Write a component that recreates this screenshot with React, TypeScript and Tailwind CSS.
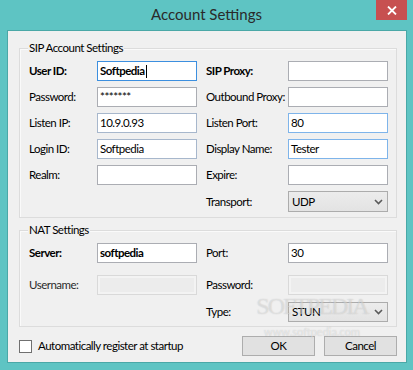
import React from "react";

const font = "font-['Segoe_UI',Lato,'Liberation_Sans',sans-serif]";

function Field({
  value,
  bold,
  tone = "gray",
  caret,
}: {
  value?: string;
  bold?: boolean;
  tone?: "gray" | "blue" | "focus" | "soft" | "off";
  caret?: boolean;
}) {
  const border =
    tone === "focus"
      ? "border-[#3c8fdf]"
      : tone === "blue"
      ? "border-[#7eb4ea]"
      : tone === "soft"
      ? "border-[#a7b7cc]"
      : tone === "off"
      ? "border-[#d9d9d9]"
      : "border-[#abadb3]";
  const bg = tone === "off" ? "bg-[#ececec] shadow-[inset_0_0_0_2px_#f3f3f3]" : "bg-white";
  return (
    <div className={`h-[20px] w-[100px] border ${border} ${bg} flex items-center pl-[2px]`}>
      <span className={bold ? "font-bold" : ""}>{value}</span>
      {caret && <span className="ml-[1px] h-[13px] w-px bg-black" />}
    </div>
  );
}

function Select({ value, tall }: { value: string; tall?: boolean }) {
  return (
    <div
      className={`${tall ? "h-[21px]" : "h-[20px]"} w-[100px] border border-[#acacac] bg-gradient-to-b from-[#ececec] to-[#e3e3e3] flex items-center justify-between pl-[3px] pr-[4px]`}
    >
      <span>{value}</span>
      <svg width="9" height="6" viewBox="0 0 9 6">
        <path d="M1 1 L4.5 4.5 L8 1" stroke="#5a5a5a" strokeWidth="1.6" fill="none" />
      </svg>
    </div>
  );
}

function Label({ text, bold, right }: { text: string; bold?: boolean; right?: boolean }) {
  return (
    <div className={`h-[20px] flex items-center whitespace-nowrap ${right ? "pl-[9px]" : ""} ${bold ? "font-bold" : ""}`}>
      {text}
    </div>
  );
}

function Group({ title, children, className }: { title: string; children: React.ReactNode; className: string }) {
  return (
    <div className={`relative border border-[#dcdcdc] shadow-[inset_1px_1px_0_#fafafa] ${className}`}>
      <span className="absolute -top-[7px] left-[8px] bg-[#f0f0f0] px-[1px]">{title}</span>
      {children}
    </div>
  );
}

export default function App() {
  return (
    <div
      className={`relative w-[413px] h-[370px] bg-[#5ec4c3] text-black text-[11.5px] leading-none tracking-[-0.5px] overflow-hidden ${font}`}
    >
      {/* title bar */}
      <div className="relative h-[30px] flex items-center justify-center">
        <span className="text-[15px] tracking-normal text-[#2a2a2a] -mt-[1px]">Account Settings</span>
        <div className="absolute right-[6px] top-0 w-[31px] h-[20px] bg-[#c75050] flex items-center justify-center">
          <svg width="10" height="9" viewBox="0 0 10 9">
            <path d="M1 0.5 L9 8.5 M9 0.5 L1 8.5" stroke="#fff" strokeWidth="1.8" />
          </svg>
        </div>
      </div>

      {/* client area */}
      <div className="ml-[7px] w-[400px] h-[333px] bg-[#f0f0f0] border border-[#4aa8a7] pl-[11px] pr-[9px] pt-[17px]">
        <Group title="SIP Account Settings" className="pt-[12px] pb-[5px] pl-[9px]">
          <div className="grid grid-cols-[68px_100px_91px_100px] grid-rows-[20px_26px_26px_26px_26px_27px] items-end">
            <Label text="User ID:" bold />
            <Field value="Softpedia" bold tone="focus" caret />
            <Label text="SIP Proxy:" bold right />
            <Field />

            <Label text="Password:" />
            <Field value="*******" />
            <Label text="Outbound Proxy:" right />
            <Field />

            <Label text="Listen IP:" />
            <Field value="10.9.0.93" tone="soft" />
            <Label text="Listen Port:" right />
            <Field value="80" tone="blue" />

            <Label text="Login ID:" />
            <Field value="Softpedia" tone="soft" />
            <Label text="Display Name:" right />
            <Field value="Tester" tone="blue" />

            <Label text="Realm:" />
            <Field />
            <Label text="Expire:" right />
            <Field />

            <span />
            <span />
            <Label text="Transport:" right />
            <Select value="UDP" tall />
          </div>
        </Group>

        <Group title="NAT Settings" className="mt-[12px] pt-[12px] pb-[4px] pl-[9px]">
          <div className="grid grid-cols-[68px_100px_91px_100px] grid-rows-[20px_32px_27px] items-end">
            <Label text="Server:" bold />
            <Field value="softpedia" bold />
            <Label text="Port:" right />
            <Field value="30" />

            <div className="text-[#2b2b2b]">
              <Label text="Username:" />
            </div>
            <Field tone="off" />
            <Label text="Password:" right />
            <Field tone="off" />

            <span />
            <span />
            <Label text="Type:" right />
            <Select value="STUN" />
          </div>
        </Group>

        <div className="mt-[9px] flex items-center h-[20px]">
          <div className="w-[13px] h-[13px] border border-[#707070] bg-white" />
          <span className="ml-[6px]">Automatically register at startup</span>
          <div className="ml-auto flex gap-[9px]">
            <button className="w-[73px] h-[20px] border border-[#adadad] bg-[#e1e1e1]">OK</button>
            <button className="w-[73px] h-[20px] border border-[#adadad] bg-[#e1e1e1]">Cancel</button>
          </div>
        </div>
      </div>

      {/* watermark */}
      <div className="pointer-events-none absolute left-[248px] top-[294px] w-[128px] flex flex-col items-center">
        <span className="font-['Liberation_Serif',serif] text-[24px] tracking-[-2px] text-white/40 [text-shadow:0_0_1px_rgba(110,110,110,0.35)]">
          SOFTPEDIA
        </span>
        <span className="mt-[8px] text-[11px] tracking-normal text-white/50 [text-shadow:0_0_1px_rgba(110,110,110,0.35)]">
          www.softpedia.com
        </span>
      </div>
    </div>
  );
}
